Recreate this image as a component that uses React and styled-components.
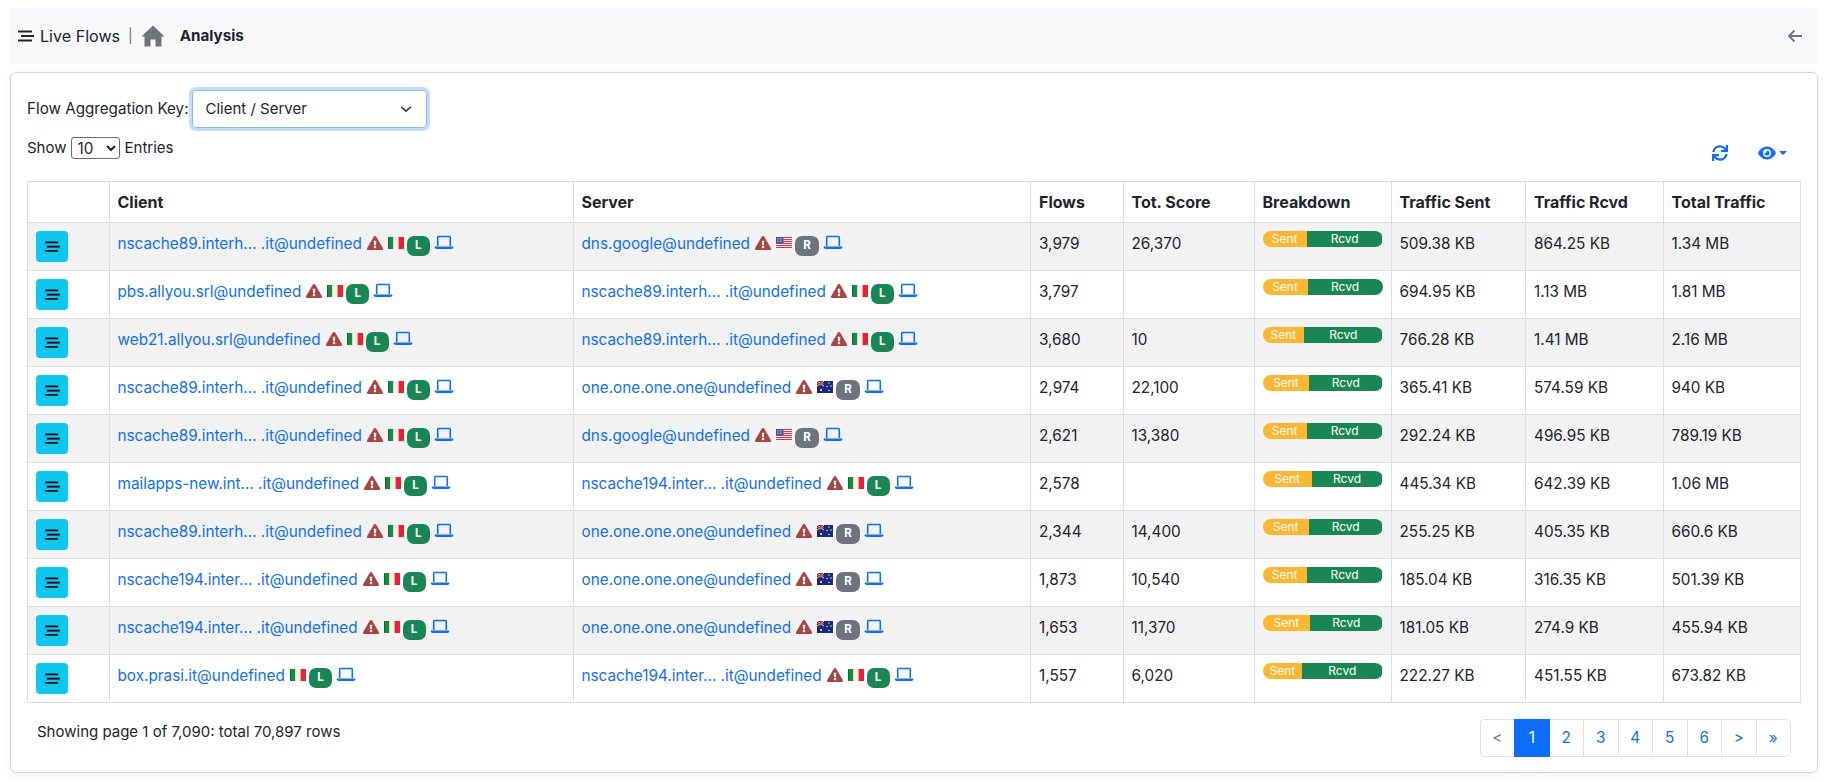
import React from 'react'
import styled, { createGlobalStyle } from 'styled-components'
import { FaExclamationTriangle, FaSync } from 'react-icons/fa'

const COLUMNS = [81.5, 464, 457.5, 92.5, 131, 137, 134.5, 137.5, 137.5]
const HEADERS = ['', 'Client', 'Server', 'Flows', 'Tot. Score', 'Breakdown', 'Traffic Sent', 'Traffic Rcvd', 'Total Traffic']

const NS89 = { name: 'nscache89.interh... .it@undefined', warn: true, flag: 'it', tag: 'L' }
const NS194 = { name: 'nscache194.inter... .it@undefined', warn: true, flag: 'it', tag: 'L' }
const GOOGLE = { name: 'dns.google@undefined', warn: true, flag: 'us', tag: 'R' }
const ONE = { name: 'one.one.one.one@undefined', warn: true, flag: 'au', tag: 'R' }

const ROWS = [
	{ client: NS89, server: GOOGLE, flows: '3,979', score: '26,370', sentPct: 37, sent: '509.38 KB', rcvd: '864.25 KB', total: '1.34 MB' },
	{ client: { name: 'pbs.allyou.srl@undefined', warn: true, flag: 'it', tag: 'L' }, server: NS89, flows: '3,797', score: '', sentPct: 37.5, sent: '694.95 KB', rcvd: '1.13 MB', total: '1.81 MB' },
	{ client: { name: 'web21.allyou.srl@undefined', warn: true, flag: 'it', tag: 'L' }, server: NS89, flows: '3,680', score: '10', sentPct: 34.7, sent: '766.28 KB', rcvd: '1.41 MB', total: '2.16 MB' },
	{ client: NS89, server: ONE, flows: '2,974', score: '22,100', sentPct: 38.9, sent: '365.41 KB', rcvd: '574.59 KB', total: '940 KB' },
	{ client: NS89, server: GOOGLE, flows: '2,621', score: '13,380', sentPct: 37, sent: '292.24 KB', rcvd: '496.95 KB', total: '789.19 KB' },
	{ client: { name: 'mailapps-new.int... .it@undefined', warn: true, flag: 'it', tag: 'L' }, server: NS194, flows: '2,578', score: '', sentPct: 41, sent: '445.34 KB', rcvd: '642.39 KB', total: '1.06 MB' },
	{ client: NS89, server: ONE, flows: '2,344', score: '14,400', sentPct: 38.6, sent: '255.25 KB', rcvd: '405.35 KB', total: '660.6 KB' },
	{ client: NS194, server: ONE, flows: '1,873', score: '10,540', sentPct: 36.9, sent: '185.04 KB', rcvd: '316.35 KB', total: '501.39 KB' },
	{ client: NS194, server: ONE, flows: '1,653', score: '11,370', sentPct: 39.7, sent: '181.05 KB', rcvd: '274.9 KB', total: '455.94 KB' },
	{ client: { name: 'box.prasi.it@undefined', warn: false, flag: 'it', tag: 'L' }, server: NS194, flows: '1,557', score: '6,020', sentPct: 33, sent: '222.27 KB', rcvd: '451.55 KB', total: '673.82 KB' },
]

const GlobalStyle = createGlobalStyle`
	body {
		margin: 0;
		background: #fff;
		color: #212529;
		font-family: Inter, "Liberation Sans", sans-serif;
		font-size: 15.3px;
		line-height: 24px;
	}
`

const Page = styled.div`
	padding: 8px 17px 9px 10px;
`

const NavBar = styled.nav`
	height: 56px;
	padding: 0 8px;
	display: flex;
	align-items: center;
	background: #f7f8fa;
	border-radius: 4px;
	margin-bottom: 8px;
`

const NavTitle = styled.span`
	margin-left: 6px;
	font-size: 16.1px;
	color: #212529;
`

const NavDivider = styled.span`
	margin: 0 8px;
	color: #6c757d;
	font-size: 14px;
`

const NavActive = styled.span`
	margin-left: 15px;
	font-weight: 700;
	font-size: 15.2px;
`

const BackLink = styled.span`
	margin-left: auto;
	margin-right: 7px;
	display: flex;
	color: #6c757d;
`

const Card = styled.section`
	height: 701px;
	box-sizing: border-box;
	border: 1px solid #d3d5d8;
	border-radius: 6px;
	box-shadow: 0 2px 8px rgba(0, 0, 0, 0.06);
	padding: 17px 16px 16px;
	display: flex;
	flex-direction: column;
`

const KeyRow = styled.div`
	display: flex;
	align-items: center;
	flex: none;
	height: 38px;
`

const KeyLabel = styled.label`
	font-size: 15.2px;
	margin-right: 3px;
`

const KeySelect = styled.div`
	width: 235px;
	height: 38px;
	box-sizing: border-box;
	padding: 0 13px;
	display: flex;
	align-items: center;
	justify-content: space-between;
	border: 1px solid #86b7fe;
	border-radius: 4px;
	box-shadow: 0 0 0 3px rgba(13, 110, 253, 0.25);
	font-size: 15px;
`

const ToolRow = styled.div`
	display: flex;
	align-items: flex-start;
	justify-content: space-between;
	flex: none;
	height: 44px;
	margin-top: 9px;
`

const ShowEntries = styled.div`
	display: flex;
	align-items: center;
	font-size: 15px;
	height: 21px;
`

const SizeSelect = styled.select`
	width: 49px;
	height: 22px;
	margin: 0 5px 0 4px;
	padding: 0 0 0 2px;
	background: #fff;
	border: 1px solid #6b6b6b;
	border-radius: 3px;
	font-family: inherit;
	font-size: 15.3px;
	color: #212529;
`

const TableTools = styled.div`
	display: flex;
	align-items: center;
	color: #0d6efd;
	margin: 8px 14px 0 0;
	font-size: 16px;
`

const ToolIcon = styled.span`
	display: flex;
	margin-right: ${p => p.$gap || 0}px;
`

const Caret = styled.span`
	width: 0;
	height: 0;
	margin-left: 3px;
	border-left: 4px solid transparent;
	border-right: 4px solid transparent;
	border-top: 4px solid #0d6efd;
`

const Table = styled.table`
	width: 1773px;
	flex: none;
	table-layout: fixed;
	border-collapse: collapse;
`

const Th = styled.th`
	height: 41px;
	box-sizing: border-box;
	padding: 0 8px;
	border: 1px solid #dadde1;
	text-align: left;
	font-weight: 700;
	font-size: 16px;
`

const Row = styled.tr`
	background: ${p => (p.$striped ? '#f2f2f2' : '#fff')};
`

const Td = styled.td`
	height: 48px;
	box-sizing: border-box;
	padding: 9px 8px 8px;
	border: 1px solid #dadde1;
	vertical-align: top;
	white-space: nowrap;
`

const ActionCell = styled(Td)`
	padding: 8px;
`

const ActionButton = styled.button`
	width: 32px;
	height: 31px;
	padding: 0;
	display: flex;
	align-items: center;
	justify-content: center;
	background: #0cc8f0;
	border: 0;
	border-radius: 4px;
	color: #000;
`

const HostLine = styled.div`
	display: flex;
	align-items: flex-start;
	height: 29px;
`

const HostLink = styled.a`
	color: #0d6efd;
	text-decoration: none;
`

const WarnIcon = styled(FaExclamationTriangle)`
	margin: 3px 0 0 5px;
	color: #a94442;
	font-size: 16px;
`

const FlagBox = styled.svg`
	margin: 5px 0 0 5px;
	width: 16px;
	height: 12px;
	flex: none;
`

const Tag = styled.span`
	margin: 4px 0 0 3px;
	height: 20px;
	min-width: ${p => (p.$kind === 'R' ? 24 : 23)}px;
	display: flex;
	align-items: center;
	justify-content: center;
	border-radius: 7px;
	background: ${p => (p.$kind === 'R' ? '#6c757d' : '#198754')};
	color: #fff;
	font-size: 11.5px;
	font-weight: 700;
	line-height: 1;
`

const LaptopIcon = styled.svg`
	margin: 0 0 0 4px;
	width: 20px;
	height: 20px;
	flex: none;
	color: #0d6efd;
`

const Bar = styled.div`
	display: flex;
	height: 16px;
	margin-top: -1px;
	border-radius: 8px;
	overflow: hidden;
	color: #fff;
	font-size: 12px;
	line-height: 16px;
	text-align: center;
`

const BarPart = styled.div`
	background: ${p => (p.$kind === 'sent' ? '#fdb62f' : '#198754')};
`

const Footer = styled.div`
	display: flex;
	justify-content: space-between;
	align-items: flex-start;
	flex: none;
	margin-top: 16px;
	padding: 0 10px;
`

const Summary = styled.div`
	font-size: 15px;
	line-height: 24px;
	margin-top: 1px;
`

const Pager = styled.ul`
	display: flex;
	list-style: none;
	margin: 0;
	padding: 0;
`

const PageItem = styled.li`
	width: 35.5px;
	height: 38px;
	box-sizing: border-box;
	margin-left: -1px;
	display: flex;
	align-items: center;
	justify-content: center;
	border: 1px solid ${p => (p.$active ? '#0d6efd' : '#dee2e6')};
	background: ${p => (p.$active ? '#0d6efd' : '#fff')};
	color: ${p => (p.$active ? '#fff' : p.$disabled ? '#6c757d' : '#0d6efd')};
	position: ${p => (p.$active ? 'relative' : 'static')};
	&:last-child {
		border-radius: 0 6px 6px 0;
	}
	&:first-child {
		border-radius: 4px 0 0 4px;
	}
`

function Lines ({ size, inset }) {
	return (
		<svg width={size} height={size * 0.75} viewBox='0 0 16 12' fill='none' stroke='currentColor' strokeWidth='2'>
			<path d={`M0 1.5H14M${inset} 6H16M0 10.5H14`} />
		</svg>
	)
}

function Flag ({ code }) {
	if (code === 'us') {
		return (
			<FlagBox viewBox='0 0 16 12'>
				<rect width='16' height='12' fill='#fff' />
				{[0, 2, 4, 6, 8, 10].map(y => <rect key={y} y={y} width='16' height='1.1' fill='#d8383f' />)}
				<rect width='7.5' height='6.2' fill='#3c4f9a' />
				<path d='M1 1.5h5.5M1 3h5.5M1 4.5h5.5' stroke='#fff' strokeWidth='.6' strokeDasharray='.8 .7' />
			</FlagBox>
		)
	}
	if (code === 'au') {
		return (
			<FlagBox viewBox='0 0 16 12'>
				<rect width='16' height='12' fill='#1b2a78' />
				<path d='M0 0l7 5M7 0L0 5' stroke='#f3dada' strokeWidth='1' />
				<path d='M3.5 0v5M0 2.5h7' stroke='#d8383f' strokeWidth='1.2' />
				<circle cx='4' cy='9' r='1' fill='#fff' />
				<circle cx='12' cy='2' r='.7' fill='#fff' />
				<circle cx='10' cy='5.5' r='.7' fill='#fff' />
				<circle cx='14' cy='5' r='.7' fill='#fff' />
				<circle cx='12' cy='9.5' r='.7' fill='#fff' />
			</FlagBox>
		)
	}
	return (
		<FlagBox viewBox='0 0 16 12'>
			<rect width='5.4' height='12' fill='#1c8a3c' />
			<rect x='5.4' width='5.2' height='12' fill='#f1f1ee' />
			<rect x='10.6' width='5.4' height='12' fill='#f0202c' />
			<path d='M.4.4v11.2' stroke='#0b5a22' strokeWidth='.8' />
		</FlagBox>
	)
}

function Laptop () {
	return (
		<LaptopIcon viewBox='0 0 20 20' fill='none' stroke='currentColor'>
			<path d='M3.7 14V5.3q0-.8.8-.8h11q.8 0 .8.8V14' strokeWidth='1.6' />
			<path d='M1 15h18q0 1.5-1.5 1.5h-15Q1 16.500 1 15z' fill='currentColor' strokeWidth='1' />
		</LaptopIcon>
	)
}

function Host ({ host }) {
	return (
		<HostLine>
			<HostLink>{host.name}</HostLink>
			{host.warn && <WarnIcon />}
			<Flag code={host.flag} />
			<Tag $kind={host.tag}>{host.tag}</Tag>
			<Laptop />
		</HostLine>
	)
}

export default function App () {
	const pages = ['1', '2', '3', '4', '5', '6', '>', '»']
	return (
		<Page>
			<GlobalStyle />
			<NavBar>
				<Lines size={16} inset={3} />
				<NavTitle>Live Flows</NavTitle>
				<NavDivider>|</NavDivider>
				<svg width='24' height='22' viewBox='0 0 24 22' fill='#6c757d'>
					<path d='M12 0.500L23.500 11.500H20.500V21.500H14.500V14.500H9.500V21.500H3.500V11.500H0.500z' />
				</svg>
				<NavActive>Analysis</NavActive>
				<BackLink>
					<svg width='16' height='14' viewBox='0 0 16 14' fill='none' stroke='currentColor' strokeWidth='1.8'>
						<path d='M15 7H2M7.500 1.500L2 7l5.500 5.500' />
					</svg>
				</BackLink>
			</NavBar>
			<Card>
				<KeyRow>
					<KeyLabel>Flow Aggregation Key:</KeyLabel>
					<KeySelect>
						Client / Server
						<svg width='14' height='14' viewBox='0 0 16 16' fill='none' stroke='#343a40' strokeWidth='1.8'>
							<path d='M2.500 5.500l5.500 5 5.500-5' />
						</svg>
					</KeySelect>
				</KeyRow>
				<ToolRow>
					<ShowEntries>
						Show
						<SizeSelect defaultValue='10'>
							<option>10</option>
						</SizeSelect>
						Entries
					</ShowEntries>
					<TableTools>
						<ToolIcon $gap={30}><FaSync /></ToolIcon>
						<ToolIcon>
							<svg width='18' height='14' viewBox='0 0 18 14'>
								<path fill='currentColor' fillRule='evenodd' d='M9 0.500C13 0.500 16.500 3.500 18 7c-1.500 3.500-5 6.500-9 6.500S1.500 10.500 0 7C1.500 3.500 5 0.500 9 0.500zM9 3a4 4 0 1 0 0 8a4 4 0 0 0 0-8z' />
								<path fill='currentColor' d='M9 4.500a2.500 2.500 0 1 1-2.500 2.500c.8.300 2.200-.6 2.500-2.500z' />
							</svg>
						</ToolIcon>
						<Caret />
					</TableTools>
				</ToolRow>
				<Table>
					<colgroup>
						{COLUMNS.map((width, i) => <col key={i} width={width} />)}
					</colgroup>
					<thead>
						<tr>
							{HEADERS.map((title, i) => <Th key={i}>{title}</Th>)}
						</tr>
					</thead>
					<tbody>
						{ROWS.map((row, i) =>
							<Row key={i} $striped={i % 2 === 0}>
								<ActionCell>
									<ActionButton><Lines size={15} inset={2} /></ActionButton>
								</ActionCell>
								<Td><Host host={row.client} /></Td>
								<Td><Host host={row.server} /></Td>
								<Td>{row.flows}</Td>
								<Td>{row.score}</Td>
								<Td>
									<Bar>
										<BarPart $kind='sent' style={{ width: `${row.sentPct}%` }}>Sent</BarPart>
										<BarPart $kind='rcvd' style={{ width: `${100 - row.sentPct}%` }}>Rcvd</BarPart>
									</Bar>
								</Td>
								<Td>{row.sent}</Td>
								<Td>{row.rcvd}</Td>
								<Td>{row.total}</Td>
							</Row>
						)}
					</tbody>
				</Table>
				<Footer>
					<Summary>Showing page 1 of 7,090: total 70,897 rows</Summary>
					<Pager>
						<PageItem $disabled>&lt;</PageItem>
						{pages.map((label, i) =>
							<PageItem key={label} $active={i === 0}>{label}</PageItem>
						)}
					</Pager>
				</Footer>
			</Card>
		</Page>
	)
}
